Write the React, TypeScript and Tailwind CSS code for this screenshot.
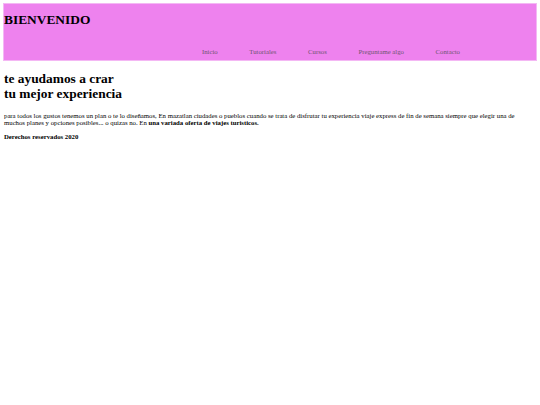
export default function App() {
  const links = ["Inicio", "Tutoriales", "Cursos", "Preguntame algo", "Contacto"];
  return (
    <div className="bg-white min-h-[405px] p-[3px] text-black font-['Liberation_Serif','DejaVu_Serif',serif]">
      <header className="bg-[#ee82ee] border border-[#f4b8f4] h-[58px] flex flex-col">
        <h1 className="text-[13.4px] font-bold leading-[13.4px] mt-[8.8px]">BIENVENIDO</h1>
        <nav className="mt-auto mb-[4px] ml-[198px] flex gap-[31.6px] text-[6.75px] leading-[7.8px] text-[#6e556e]">
          {links.map((l) => (
            <span key={l}>{l}</span>
          ))}
        </nav>
      </header>
      <main className="ml-[1px]">
        <h2 className="text-[13.4px] font-bold leading-[15.5px] mt-[9.8px]">
          te ayudamos a crar
          <br />
          tu mejor experiencia
        </h2>
        <p className="text-[6.75px] leading-[7.6px] mt-[9.8px] max-w-[532px]">
          para todos los gustos tenemos un plan o te lo diseñamos, En mazatlan ciudades o pueblos cuando se trata de disfrutar tu experiencia viaje express de fin de semana siempre que elegir una de muchos planes y opciones posibles... o quizas no. En <b>una variada oferta de viajes turisticos.</b>
        </p>
        <p className="text-[6.75px] leading-[7.6px] mt-[6.5px] font-bold">Derechos reservados 2020</p>
      </main>
    </div>
  );
}
